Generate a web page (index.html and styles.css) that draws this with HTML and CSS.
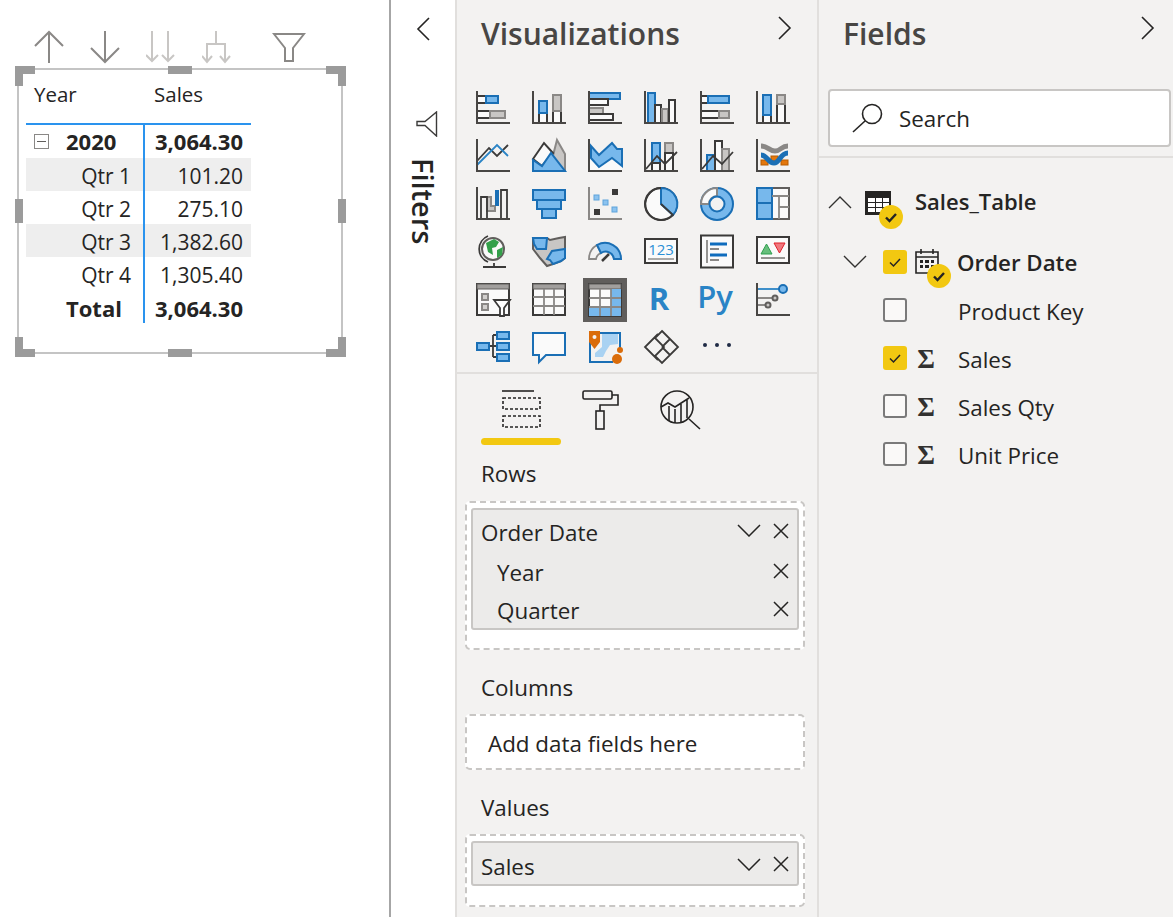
FILE: index.html
```html
<!doctype html>
<html lang="en">
<head>
    <meta charset="UTF-8">
    <title>Report view</title>
    <link rel="stylesheet" href="styles.css">
</head>
<body>

<svg class="sprite" aria-hidden="true">
    <symbol id="i-x" viewBox="0 0 16 16"><path d="M1 1 15 15M15 1 1 15"/></symbol>
    <symbol id="i-down" viewBox="0 0 24 13"><path d="M1 1 12 12 23 1"/></symbol>
    <symbol id="i-check" viewBox="0 0 24 24"><path d="M7 12.5 10.5 16 17 9"/></symbol>
</svg>

<div class="app">

    <!-- canvas -->
    <section class="canvas">
        <div class="toolbar">
            <svg class="tool" width="30" height="34" viewBox="0 0 30 34"><path d="M15 33V2M1 16 15 2 29 16"/></svg>
            <svg class="tool" width="30" height="34" viewBox="0 0 30 34"><path d="M15 1V32M1 18 15 32 29 18"/></svg>
            <svg class="tool tool--off" width="30" height="34" viewBox="0 0 30 34"><path d="M6 1V31M0 25 6 31 12 25M22 1V31M16 25 22 31 28 25"/></svg>
            <svg class="tool tool--off" width="30" height="34" viewBox="0 0 30 34"><path d="M14 1V14M5 32V14H23V32M0 26 5 32 10 26M18 26 23 32 28 26"/></svg>
            <svg class="tool tool--filter" width="34" height="30" viewBox="0 0 34 30"><path d="M2 2H32L21 16V29H13V16Z"/></svg>
        </div>

        <div class="visual">
            <span class="handle handle--tl"></span>
            <span class="handle handle--tr"></span>
            <span class="handle handle--bl"></span>
            <span class="handle handle--br"></span>
            <span class="handle handle--t"></span>
            <span class="handle handle--b"></span>
            <span class="handle handle--l"></span>
            <span class="handle handle--r"></span>

            <div class="matrix">
                <div class="matrix-head">
                    <div class="head-year">Year</div>
                    <div class="head-sales">Sales</div>
                </div>
                <div class="matrix-row matrix-row--bold matrix-row--year">
                    <div class="cell-label cell-label--year"><span class="collapse-box"></span>2020</div>
                    <div class="cell-value">3,064.30</div>
                </div>
                <div class="matrix-row matrix-row--shade">
                    <div class="cell-label">Qtr 1</div>
                    <div class="cell-value">101.20</div>
                </div>
                <div class="matrix-row">
                    <div class="cell-label">Qtr 2</div>
                    <div class="cell-value">275.10</div>
                </div>
                <div class="matrix-row matrix-row--shade">
                    <div class="cell-label">Qtr 3</div>
                    <div class="cell-value">1,382.60</div>
                </div>
                <div class="matrix-row">
                    <div class="cell-label">Qtr 4</div>
                    <div class="cell-value">1,305.40</div>
                </div>
                <div class="matrix-row matrix-row--bold">
                    <div class="cell-label cell-label--total">Total</div>
                    <div class="cell-value">3,064.30</div>
                </div>
            </div>
        </div>
    </section>

    <!-- filters pane, collapsed -->
    <aside class="filters">
        <svg class="chevron" width="14" height="24" viewBox="0 0 14 24"><path d="M13 1 2 12 13 23"/></svg>
        <svg class="filters-funnel" width="22" height="26" viewBox="0 0 22 26"><path d="M20.5 1V25L9 14.500H1V10.500H9Z"/></svg>
        <div class="filters-title">Filters</div>
    </aside>

    <!-- visualizations pane -->
    <section class="viz">
        <div class="pane-head">
            <h2>Visualizations</h2>
            <svg class="chevron" width="14" height="24" viewBox="0 0 14 24"><path d="M1 1 12 12 1 23"/></svg>
        </div>

        <div class="viz-grid">
            <!-- row 1 -->
            <svg class="icon" viewBox="0 0 34 34"><rect class="w" x="1" y="5" width="9" height="7"/><rect class="b" x="10" y="5" width="12" height="7"/><rect class="w" x="1" y="20" width="13" height="7"/><rect class="g" x="14" y="20" width="15" height="7"/><path class="axis" d="M1 0V32H34"/></svg>
            <svg class="icon" viewBox="0 0 34 34"><rect class="w" x="7" y="22" width="8" height="10"/><rect class="b" x="7" y="10" width="8" height="12"/><rect class="w" x="21" y="20" width="8" height="12"/><rect class="g" x="21" y="4" width="8" height="16"/><path class="axis" d="M1 0V32H34"/></svg>
            <svg class="icon" viewBox="0 0 34 34"><rect class="b" x="1" y="2" width="31" height="6"/><rect class="w" x="1" y="8" width="19" height="6"/><rect class="g" x="1" y="17" width="14" height="6"/><rect class="w" x="1" y="23" width="24" height="6"/><path class="axis" d="M1 0V32H34"/></svg>
            <svg class="icon" viewBox="0 0 34 34"><rect class="b" x="4" y="2" width="7" height="30"/><rect class="w" x="11" y="14" width="6" height="18"/><rect class="g" x="18" y="18" width="6" height="14"/><rect class="w" x="25" y="9" width="6" height="23"/><path class="axis" d="M1 0V32H34"/></svg>
            <svg class="icon" viewBox="0 0 34 34"><rect class="w" x="1" y="5" width="7" height="7"/><rect class="b" x="8" y="5" width="21" height="7"/><rect class="w" x="1" y="20" width="18" height="7"/><rect class="g" x="19" y="20" width="10" height="7"/><path class="axis" d="M1 0V32H34"/></svg>
            <svg class="icon" viewBox="0 0 34 34"><rect class="w" x="7" y="24" width="8" height="8"/><rect class="b" x="7" y="4" width="8" height="20"/><rect class="w" x="21" y="13" width="8" height="19"/><rect class="g" x="21" y="4" width="8" height="9"/><path class="axis" d="M1 0V32H34"/></svg>

            <!-- row 2 -->
            <svg class="icon" viewBox="0 0 34 34"><path class="line" d="M1 22 13 9 21 17 32 6"/><path class="line-blue" d="M1 26 21 6 32 17"/><path class="axis" d="M1 0V32H34"/></svg>
            <svg class="icon" viewBox="0 0 34 34"><path class="g" d="M25 1 33 15V32H17Z"/><path class="w" d="M1 20 12 4 21 14 10 27Z"/><path class="b" d="M1 21 10 27 19 14 33 32H1Z"/></svg>
            <svg class="icon" viewBox="0 0 34 34"><path class="w w--noline" d="M1 19 11 28 24 19 34 27V32H1Z"/><path class="b" d="M3 7 11 16 24 4 29 10H34V27L24 19 11 28 3 19Z"/><path class="axis" d="M1 0V32H34"/></svg>
            <svg class="icon" viewBox="0 0 34 34"><rect class="b" x="8" y="4" width="8" height="20"/><rect class="w" x="8" y="24" width="8" height="8"/><rect class="g" x="21" y="4" width="8" height="10"/><rect class="w" x="21" y="14" width="8" height="18"/><path class="line" d="M2 30 13 17 21 25 33 13"/><path class="axis" d="M1 0V32H34"/></svg>
            <svg class="icon" viewBox="0 0 34 34"><rect class="b" x="7" y="16" width="8" height="16"/><rect class="w" x="15" y="2" width="7" height="30"/><rect class="g" x="22" y="10" width="7" height="22"/><path class="line" d="M2 30 13 17 22 25 33 13"/><path class="axis" d="M1 0V32H34"/></svg>
            <svg class="icon" viewBox="0 0 34 34"><rect class="orange" x="5" y="21" width="7" height="5"/><rect class="orange" x="15" y="17" width="7" height="5"/><rect class="orange" x="25" y="21" width="7" height="5"/><path class="ribbon-gray" d="M5 7C12 7 13 12 19 12S25 7 32 7"/><path class="ribbon-blue" d="M5 16C11 16 12 24 18 24S24 14 32 14"/><path class="axis" d="M1 0V32H34"/></svg>

            <!-- row 3 -->
            <svg class="icon" viewBox="0 0 34 34"><path class="g" d="M11 10H15V19H19V24H11Z"/><path class="line" d="M5 32V10H11V32M25 32V3H31V32"/><rect class="b-solid" x="19" y="3" width="4" height="16"/><path class="axis" d="M1 0V32H34"/></svg>
            <svg class="icon" viewBox="0 0 34 34"><rect class="b" x="1" y="3" width="32" height="10"/><rect class="b" x="5" y="13" width="24" height="9"/><rect class="b" x="10" y="22" width="14" height="9"/></svg>
            <svg class="icon" viewBox="0 0 34 34"><rect class="b-soft" x="6" y="8" width="5" height="5"/><rect class="b-soft" x="15" y="13" width="5" height="5"/><rect class="b-soft" x="24" y="20" width="5" height="5"/><rect class="dark" x="24" y="2" width="6" height="6"/><rect class="dark" x="6" y="22" width="6" height="6"/><path class="axis axis--light" d="M1 0V32H34"/></svg>
            <svg class="icon" viewBox="0 0 34 34"><circle class="w" cx="17" cy="17" r="16"/><path class="b" d="M17 17V1A16 16 0 0 1 29 28Z"/><path class="line" d="M17 1A16 16 0 1 0 29 28L17 17"/></svg>
            <svg class="icon" viewBox="0 0 34 34"><circle class="b" cx="17" cy="17" r="16"/><path class="g-light" d="M17 1A16 16 0 0 0 1 17H9A8 8 0 0 1 17 9Z"/><circle class="hole" cx="17" cy="17" r="7.500"/></svg>
            <svg class="icon" viewBox="0 0 34 34"><rect class="w w--gray" x="1" y="1" width="32" height="31"/><rect class="b" x="1" y="1" width="15" height="15"/><rect class="b" x="1" y="16" width="15" height="16"/><path class="line line--gray" d="M16 9H33M23 9V32M23 20H33"/></svg>

            <!-- row 4 -->
            <svg class="icon" viewBox="0 0 34 34"><circle class="globe" cx="17" cy="14" r="11"/><path class="green" d="M10 8 18 4 23 7 20 12 16 13 17 20 12 17ZM21 15 27 12 26 20 21 23Z"/><path class="line" d="M12 1A14 14 0 0 0 12 27M7 32H30M18 28V32"/></svg>
            <svg class="icon" viewBox="0 0 34 34"><path class="g g--dark" d="M1 3H15L18 5 27 3 33 2V23L29 26 21 29 15 31 8 23 1 14Z"/><path class="b" d="M1 3H15L14 14H5L2 9Z"/><path class="b" d="M15 24 20 16 33 14V23L29 26 21 29 18 25Z"/></svg>
            <svg class="icon" viewBox="0 0 34 34"><path class="line line--gray" d="M1 24A16 16 0 0 1 9 10L13 18A8 8 0 0 0 8 24Z"/><path class="b" d="M9 10A16 16 0 0 1 33 24H26A8.500 8.500 0 0 0 13 18Z"/><path class="needle" d="M14 26 21 19"/></svg>
            <svg class="icon" viewBox="0 0 34 34"><rect class="w" x="1" y="4" width="32" height="24"/><text class="card-num" x="17" y="20">123</text><path class="line-blue line-blue--thin" d="M4 24H30"/></svg>
            <svg class="icon" viewBox="0 0 34 34"><rect class="w" x="1" y="0.500" width="32" height="32"/><path class="line line--gray" d="M7 5V28"/><path class="bar-blue" d="M10 9H27M10 20H27"/><path class="line line--gray" d="M10 14H19M10 25H19"/></svg>
            <svg class="icon" viewBox="0 0 34 34"><rect class="w" x="1" y="2" width="32" height="26"/><path class="tri-green" d="M5 19 10.500 9 16 19Z"/><path class="tri-red" d="M18 8H29L23.500 18Z"/><path class="line line--gray" d="M5 23H29"/></svg>

            <!-- row 5 -->
            <svg class="icon" viewBox="0 0 34 34"><rect class="w" x="1" y="1" width="32" height="31"/><rect class="g-head" x="1" y="1" width="32" height="5"/><rect class="g g--box" x="6" y="11" width="6" height="6"/><rect class="g g--box" x="6" y="21" width="6" height="6"/><path class="funnel" d="M18 17H34L28 25V33H24V25Z"/></svg>
            <svg class="icon" viewBox="0 0 34 34"><rect class="w" x="1" y="1" width="32" height="31"/><rect class="g-head" x="1" y="1" width="32" height="5"/><path class="line line--gray" d="M12 6V32M22 6V32M1 14H33M1 23H33"/></svg>
            <svg class="icon" viewBox="0 0 34 34"><rect class="matrix-frame" x="-2" y="-2" width="38" height="38"/><rect class="w" x="1" y="1" width="32" height="32"/><rect class="g-head" x="1" y="1" width="32" height="5"/><path class="b-fill" d="M23 6H33V33H1V24H23Z"/><path class="line line--gray" d="M12 6V33M23 6V33M1 15H33M1 24H33"/></svg>
            <svg class="icon" viewBox="0 0 34 34"><text class="lang-r" x="15" y="27">R</text></svg>
            <svg class="icon" viewBox="0 0 34 34"><text class="lang-py" x="15" y="25">Py</text></svg>
            <svg class="icon" viewBox="0 0 34 34"><path class="line-blue" d="M1 6H23"/><circle class="b" cx="27" cy="6" r="4"/><path class="line line--gray" d="M1 15H17M1 22H10"/><circle class="g g--dark" cx="19" cy="15" r="2.500"/><circle class="g g--dark" cx="12" cy="22" r="2.500"/><path class="axis" d="M1 0V32H34"/></svg>

            <!-- row 6 -->
            <svg class="icon" viewBox="0 0 34 34"><path class="line" d="M13 15H17M17 4V26M17 4H21M17 15H21M17 26H21"/><rect class="b" x="1" y="12" width="12" height="7"/><rect class="b" x="21" y="1" width="12" height="7"/><rect class="b" x="21" y="12" width="12" height="7"/><rect class="b" x="21" y="23" width="12" height="7"/></svg>
            <svg class="icon" viewBox="0 0 34 34"><path class="bubble" d="M1 2H33V24H14L7 31V24H1Z"/></svg>
            <svg class="icon" viewBox="0 0 34 34"><path class="map-frame" d="M2 2H32V20M25 31H2V2"/><path class="map-water" d="M14 3H30V13L22 14 18 20 15 26H7V22L14 16Z"/><path class="orange-solid" d="M1 0H12V11L6.500 18 1 11Z"/><circle class="pin-hole" cx="6.500" cy="6" r="2"/><circle class="orange-solid" cx="29" cy="28" r="5"/><circle class="orange-solid" cx="32" cy="19" r="3"/></svg>
            <svg class="icon" viewBox="0 0 34 34"><path class="line" d="M14 3 1 16 14 29M18 0 34 16 18 32 11 25 20 16 11 7ZM18 16 26 24M18 16 26 8"/></svg>
            <svg class="icon" viewBox="0 0 34 34"><circle class="dot" cx="5" cy="14" r="2"/><circle class="dot" cx="17" cy="14" r="2"/><circle class="dot" cx="29" cy="14" r="2"/></svg>
        </div>

        <div class="viz-rule"></div>

        <div class="tabs">
            <div class="tab">
                <svg class="tab-icon" width="40" height="38" viewBox="0 0 40 38"><path d="M1 1H33"/><rect class="dash" x="2" y="8" width="37" height="11"/><rect class="dash" x="2" y="26" width="37" height="11"/></svg>
                <span class="tab-bar"></span>
            </div>
            <div class="tab">
                <svg class="tab-icon" width="38" height="40" viewBox="0 0 38 40"><rect x="1" y="1" width="29" height="8" rx="1.500"/><path d="M30 5H36V15H18V21"/><rect x="14" y="21" width="8" height="18"/></svg>
            </div>
            <div class="tab">
                <svg class="tab-icon" width="42" height="40" viewBox="0 0 42 40"><circle cx="17" cy="17" r="16"/><path d="M29 29 40 39M1 17 8 13 15 17 29 8M9 16V31M15 19V33M21 14V32M27 10V28"/></svg>
            </div>
        </div>

        <div class="well-label well-label--first">Rows</div>
        <div class="well">
            <div class="chip">
                <div class="chip-row chip-row--top">
                    <span>Order Date</span>
                    <span class="chip-tools">
                        <svg class="mini mini--down"><use href="#i-down"/></svg>
                        <svg class="mini mini--x"><use href="#i-x"/></svg>
                    </span>
                </div>
                <div class="chip-row chip-row--sub">
                    <span>Year</span>
                    <span class="chip-tools"><svg class="mini mini--x"><use href="#i-x"/></svg></span>
                </div>
                <div class="chip-row chip-row--sub">
                    <span>Quarter</span>
                    <span class="chip-tools"><svg class="mini mini--x"><use href="#i-x"/></svg></span>
                </div>
            </div>
        </div>

        <div class="well-label">Columns</div>
        <div class="well well--empty">Add data fields here</div>

        <div class="well-label">Values</div>
        <div class="well well--values">
            <div class="chip">
                <div class="chip-row chip-row--single">
                    <span>Sales</span>
                    <span class="chip-tools">
                        <svg class="mini mini--down"><use href="#i-down"/></svg>
                        <svg class="mini mini--x"><use href="#i-x"/></svg>
                    </span>
                </div>
            </div>
        </div>
    </section>

    <!-- fields pane -->
    <section class="fields">
        <div class="pane-head pane-head--fields">
            <h2>Fields</h2>
            <svg class="chevron" width="14" height="24" viewBox="0 0 14 24"><path d="M1 1 12 12 1 23"/></svg>
        </div>

        <div class="search">
            <svg class="search-icon" width="32" height="30" viewBox="0 0 32 30"><circle cx="20" cy="11" r="9.500"/><path d="M13 18 1 29"/></svg>
            <span>Search</span>
        </div>

        <div class="tree">
            <div class="tree-table">
                <svg class="tree-chev tree-chev--up"><use href="#i-down"/></svg>
                <span class="with-badge with-badge--table">
                    <svg width="26" height="24" viewBox="0 0 26 24"><rect class="t-solid" width="26" height="24"/><path class="t-cells" d="M3 7H10V11H3ZM11 7H17V11H11ZM18 7H24V11H18ZM3 12H10V16H3ZM11 12H17V16H11ZM18 12H24V16H18ZM3 17H10V21H3ZM11 17H17V21H11Z"/></svg>
                    <svg class="badge" viewBox="0 0 24 24"><use href="#i-check"/></svg>
                </span>
                <span class="tree-name">Sales_Table</span>
            </div>

            <div class="field-row field-row--open">
                <svg class="tree-chev"><use href="#i-down"/></svg>
                <span class="check check--on"><svg viewBox="0 0 24 24"><use href="#i-check"/></svg></span>
                <span class="field-icon with-badge with-badge--cal">
                    <svg width="24" height="26" viewBox="0 0 24 26"><path class="cal" d="M1 4H23V25H1ZM1 9H23M6 1V6M18 1V6"/><path class="cal-cells" d="M5 12H8V15H5ZM10 12H14V15H10ZM16 12H19V15H16ZM5 17H8V20H5ZM10 17H14V20H10ZM16 17H19V20H16Z"/></svg>
                    <svg class="badge" viewBox="0 0 24 24"><use href="#i-check"/></svg>
                </span>
                <span class="field-name field-name--bold">Order Date</span>
            </div>
            <div class="field-row">
                <span class="check"></span>
                <span class="field-icon"></span>
                <span class="field-name">Product Key</span>
            </div>
            <div class="field-row">
                <span class="check check--on"><svg viewBox="0 0 24 24"><use href="#i-check"/></svg></span>
                <span class="field-icon sigma">Σ</span>
                <span class="field-name">Sales</span>
            </div>
            <div class="field-row">
                <span class="check"></span>
                <span class="field-icon sigma">Σ</span>
                <span class="field-name">Sales Qty</span>
            </div>
            <div class="field-row">
                <span class="check"></span>
                <span class="field-icon sigma">Σ</span>
                <span class="field-name">Unit Price</span>
            </div>
        </div>
    </section>
</div>

</body>
</html>
```

FILE: styles.css
```css
* {
    box-sizing: border-box;
}

html, body {
    margin: 0;
    height: 100%;
    overflow: hidden;
}

body {
    font-family: "Open Sans", "Noto Sans", sans-serif;
    font-size: 22.4px;
    color: #252423;
    background: #fff;
}

.sprite {
    display: none;
}

.app {
    display: flex;
    height: 917px;
}

/* canvas */
.canvas {
    width: 391px;
    border-right: 2px solid #a6a6a6;
    padding-top: 30px;
}

.toolbar {
    display: flex;
    height: 36px;
    padding-left: 34px;
}

.tool {
    margin-right: 26px;
    fill: none;
    stroke: #8a8886;
    stroke-width: 2;
}

.tool--off {
    stroke: #c8c6c4;
}

.tool--filter {
    margin: 2px 0 0 14px;
    stroke-width: 2;
}

.visual {
    position: relative;
    width: 326px;
    height: 286px;
    margin: 2px 0 0 17px;
    border: 2px solid #c4c4c4;
    padding: 0 0 0 7px;
}

.handle {
    position: absolute;
    background: #9b9b9b;
}

.handle--t, .handle--b {
    left: 149px;
    width: 24px;
    height: 8px;
}

.handle--t {
    top: -4px;
}

.handle--b {
    bottom: -5px;
}

.handle--l, .handle--r {
    top: 129px;
    width: 8px;
    height: 24px;
}

.handle--l {
    left: -4px;
}

.handle--r {
    right: -5px;
}

.handle--tl, .handle--tr, .handle--bl, .handle--br {
    width: 20px;
    height: 20px;
    background: none;
    border: 0 solid #9b9b9b;
}

.handle--tl {
    left: -4px;
    top: -4px;
    border-width: 8px 0 0 8px;
}

.handle--tr {
    right: -5px;
    top: -4px;
    border-width: 8px 8px 0 0;
}

.handle--bl {
    left: -4px;
    bottom: -5px;
    border-width: 0 0 8px 8px;
}

.handle--br {
    right: -5px;
    bottom: -5px;
    border-width: 0 8px 8px 0;
}

.matrix {
    width: 225px;
    font-size: 21px;
}

.matrix-head {
    display: flex;
    height: 55px;
    padding-top: 9px;
    font-size: 20.5px;
    line-height: 30px;
    border-bottom: 2px solid #2a93ee;
}

.head-year {
    width: 128px;
    padding-left: 8px;
}

.matrix-row {
    display: flex;
    height: 33px;
    line-height: 37px;
}

.matrix-row--shade {
    background: #eeeeee;
}

.matrix-row--bold {
    font-size: 22px;
    font-weight: 700;
    line-height: 37px;
}

.matrix-row--year {
    line-height: 33px;
}

.cell-label {
    width: 117px;
    padding-right: 12px;
    text-align: right;
}

.cell-label--year {
    display: flex;
    align-items: center;
    text-align: left;
    padding: 0 0 0 8px;
}

.cell-label--total {
    padding: 0 0 0 40px;
    text-align: left;
}

.collapse-box {
    position: relative;
    width: 15px;
    height: 15px;
    margin-right: 17px;
    border: 1px solid #8a8886;
}

.collapse-box::after {
    content: "";
    position: absolute;
    left: 2px;
    right: 2px;
    top: 6px;
    height: 1px;
    background: #605e5c;
}

.cell-value {
    width: 108px;
    padding-right: 8px;
    text-align: right;
    border-left: 2px solid #2a93ee;
}

/* filters */
.filters {
    width: 64px;
    padding-left: 25px;
}

.chevron {
    fill: none;
    stroke: #252423;
    stroke-width: 1.6;
}

.filters .chevron {
    display: block;
    margin-top: 17px;
}

.filters-funnel {
    display: block;
    margin-top: 70px;
    fill: none;
    stroke: #3b3a39;
    stroke-width: 1.4;
}

.filters-title {
    margin: 21px 0 0 -10px;
    writing-mode: vertical-rl;
    font-size: 29px;
    font-weight: 600;
    line-height: 34px;
}

/* visualizations */
.viz {
    width: 362px;
    background: #f3f2f1;
    border-left: 2px solid #e1dfdd;
}

.pane-head {
    display: flex;
    justify-content: space-between;
    height: 68px;
    padding: 0 25px 0 24px;
}

.pane-head h2 {
    margin: 0;
    font-size: 30px;
    font-weight: 600;
    line-height: 68px;
    color: #484644;
}

.pane-head .chevron {
    margin-top: 16px;
}

.viz-grid {
    display: grid;
    grid-template-columns: repeat(6, 34px);
    grid-auto-rows: 34px;
    gap: 14px 22px;
    margin: 23px 0 0 19px;
}

.icon {
    width: 34px;
    height: 34px;
    overflow: visible;
}

/* icon parts */
.axis {
    fill: none;
    stroke: #484644;
    stroke-width: 2;
}

.axis--light {
    stroke: #8a8886;
}

.w {
    fill: #fafafa;
    stroke: #3b3a39;
    stroke-width: 2;
}

.w--gray {
    stroke: #605e5c;
}

.w--noline {
    stroke: none;
}

.b {
    fill: #77b8ec;
    stroke: #1a6fb5;
    stroke-width: 2;
}

.b-solid {
    fill: #1a6fb5;
}

.b-soft {
    fill: #8cc3ef;
    stroke: #5ea3dc;
}

.b-fill {
    fill: #77b8ec;
}

.g {
    fill: #c8c6c4;
    stroke: #8a8886;
    stroke-width: 2;
}

.g--dark {
    stroke: #605e5c;
}

.g--box {
    fill: #d2d0ce;
}

.g-light {
    fill: #fafafa;
    stroke: #8a8886;
    stroke-width: 2;
}

.g-head {
    fill: #a19f9d;
    stroke: #605e5c;
}

.hole {
    fill: #f3f2f1;
    stroke: #1a6fb5;
    stroke-width: 2;
}

.dark {
    fill: #3b3a39;
}

.line {
    fill: none;
    stroke: #3b3a39;
    stroke-width: 1.8;
}

.line--gray {
    stroke: #8a8886;
}

.line-blue {
    fill: none;
    stroke: #2a84c6;
    stroke-width: 1.8;
}

.line-blue--thin {
    stroke: #a19f9d;
}

.orange {
    fill: #e3770c;
    stroke: #b85c00;
}

.orange-solid {
    fill: #da6c0a;
}

.pin-hole {
    fill: #f3f2f1;
}

.ribbon-gray {
    fill: none;
    stroke: #8a8886;
    stroke-width: 5;
}

.ribbon-blue {
    fill: none;
    stroke: #1a6fb5;
    stroke-width: 5;
}

.globe {
    fill: #fafafa;
    stroke: #605e5c;
    stroke-width: 2;
}

.green {
    fill: #33a04a;
}

.needle {
    fill: none;
    stroke: #3b3a39;
    stroke-width: 2.5;
}

.card-num {
    font-size: 15px;
    fill: #2a8fd6;
    text-anchor: middle;
}

.bar-blue {
    fill: none;
    stroke: #0f6cbd;
    stroke-width: 3;
}

.tri-green {
    fill: #67bf7c;
    stroke: #2f9e4f;
}

.tri-red {
    fill: #f0797f;
    stroke: #e0202b;
}

.funnel {
    fill: #fff;
    stroke: #3b3a39;
    stroke-width: 1.8;
}

.matrix-frame {
    fill: none;
    stroke: #605e5c;
    stroke-width: 6;
}

.lang-r, .lang-py {
    font-weight: 700;
    fill: #2a84c6;
    text-anchor: middle;
}

.lang-r {
    font-size: 31px;
}

.lang-py {
    font-size: 31px;
    font-weight: 600;
}

.bubble {
    fill: #fafafa;
    stroke: #1a6fb5;
    stroke-width: 2;
}

.map-frame {
    fill: #f3f2f1;
    stroke: #1a6fb5;
    stroke-width: 2;
}

.map-water {
    fill: #a9d2f2;
}

.dot {
    fill: #1f2b45;
}

.viz-rule {
    height: 2px;
    margin-top: 7px;
    background: #e1dfdd;
}

.tabs {
    display: flex;
    height: 71px;
    margin-left: 24px;
}

.tab {
    display: flex;
    flex-direction: column;
    align-items: center;
    width: 80px;
    padding-top: 16px;
}

.tab-icon {
    flex: none;
    fill: none;
    stroke: #252423;
    stroke-width: 1.6;
}

.tab-icon .dash {
    stroke-dasharray: 3 2;
}

.tab-bar {
    width: 100%;
    height: 7px;
    margin-top: auto;
    border-radius: 4px;
    background: #f2c811;
}

.well-label {
    height: 30px;
    margin: 23px 0 11px 24px;
    line-height: 30px;
}

.well-label--first {
    margin-top: 14px;
    margin-bottom: 12px;
}

.well {
    width: 340px;
    height: 149px;
    margin-left: 8px;
    padding: 5px 4px;
    background: #fff;
    border: 2px dashed #c8c6c4;
    border-radius: 5px;
}

.well--empty {
    height: 56px;
    padding: 0 0 0 21px;
    line-height: 56px;
}

.well--values {
    height: 73px;
}

.chip {
    background: #ecebea;
    border: 2px solid #c8c6c4;
    border-radius: 3px;
}

.chip-row {
    display: flex;
    justify-content: space-between;
    align-items: center;
    padding: 0 8px;
}

.chip-row--top {
    height: 42px;
    padding-top: 3px;
}

.chip-row--sub {
    height: 38px;
    padding-top: 3px;
    padding-left: 24px;
}

.chip-row--single {
    height: 41px;
    padding-top: 5px;
}

.chip-tools {
    display: flex;
    align-items: center;
    margin-top: -4px;
}

.mini {
    fill: none;
    stroke: #252423;
    stroke-width: 1.5;
    overflow: visible;
}

.mini--down {
    width: 24px;
    height: 13px;
    margin-right: 12px;
}

.mini--x {
    width: 16px;
    height: 16px;
}

/* fields */
.fields {
    flex: 1;
    background: #f3f2f1;
    border-left: 2px solid #e1dfdd;
}

.pane-head--fields {
    height: 89px;
    padding: 0 18px 0 24px;
}

.search {
    display: flex;
    align-items: center;
    width: 343px;
    height: 58px;
    margin-left: 9px;
    padding-left: 22px;
    background: #fff;
    border: 2px solid #c8c6c4;
    border-radius: 4px;
}

.search span {
    padding-top: 1px;
}

.search-icon {
    margin-right: 15px;
    fill: none;
    stroke: #252423;
    stroke-width: 1.6;
}

.tree {
    margin-top: 9px;
    padding-top: 20px;
    border-top: 2px solid #e1dfdd;
}

.tree-table {
    display: flex;
    align-items: center;
    height: 48px;
    padding-left: 9px;
    margin-bottom: 13px;
}

.tree-chev {
    flex: none;
    width: 24px;
    height: 13px;
    fill: none;
    stroke: #323130;
    stroke-width: 1.4;
}

.tree-chev--up {
    transform: scaleY(-1);
}

.with-badge {
    position: relative;
    display: block;
    flex: none;
    line-height: 0;
}

.with-badge--table {
    width: 26px;
    height: 24px;
    margin: 2px 24px 0 13px;
}

.t-solid {
    fill: #252423;
}

.t-cells {
    fill: #fff;
}

.badge {
    position: absolute;
    right: -12px;
    bottom: -14px;
    width: 24px;
    height: 24px;
    border-radius: 50%;
    background: #f2c811;
    fill: none;
    stroke: #252423;
    stroke-width: 2.4;
}

.tree-name {
    margin-top: -3px;
    font-size: 22px;
    font-weight: 600;
}

.field-row {
    display: flex;
    align-items: center;
    height: 48px;
    padding-left: 64px;
}

.field-row--open {
    height: 49px;
    padding-left: 24px;
}

.field-row--open .tree-chev {
    margin-top: -4px;
    margin-right: 16px;
}

.check {
    flex: none;
    width: 24px;
    height: 24px;
    margin-top: -4px;
    background: #faf9f8;
    border: 2px solid #7a7a7a;
    border-radius: 3px;
}

.check--on {
    background: #f2c811;
    border: 0;
}

.check svg {
    display: block;
    width: 24px;
    height: 24px;
    fill: none;
    stroke: #252423;
    stroke-width: 1.5;
}

.field-icon {
    flex: none;
    width: 24px;
    margin: 0 19px 0 8px;
}

.field-icon.with-badge {
    height: 26px;
    margin-top: -5px;
    margin-right: 18px;
}

.field-name {
    margin-top: -2px;
}

.cal {
    fill: none;
    stroke: #252423;
    stroke-width: 1.6;
}

.cal-cells {
    fill: #252423;
}

.sigma {
    margin: -2px 20px 0 7px;
    font-family: "Liberation Serif", serif;
    font-size: 27px;
    font-weight: 700;
    line-height: 26px;
    text-align: center;
    color: #323130;
}

.field-name--bold {
    font-size: 22.3px;
    font-weight: 600;
}
```
